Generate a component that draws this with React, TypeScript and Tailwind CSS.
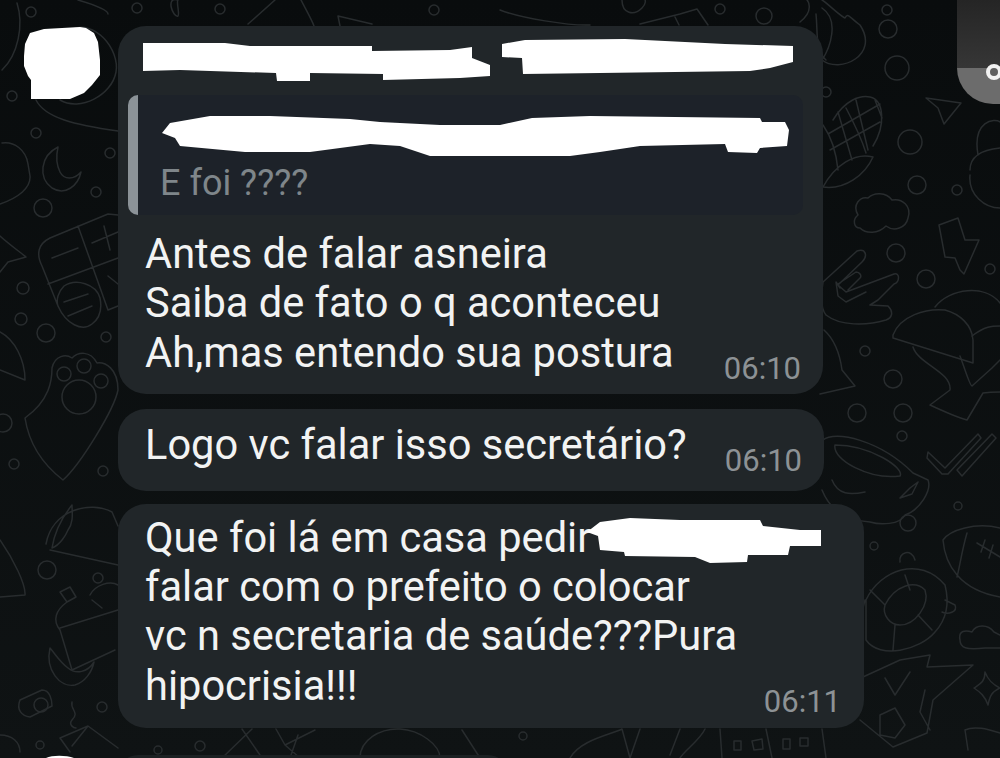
import React from "react";

const circles: [number, number, number][] = [
  [31, 12, 5], [137, 8, 5], [12, 96, 5], [36, 133, 5], [110, 153, 5], [43, 208, 9], [96, 192, 5],
  [23, 288, 6], [21, 319, 6], [46, 333, 9], [106, 337, 5], [14, 464, 5], [3, 423, 9], [103, 471, 5],
  [220, 9, 5], [434, 10, 5],
  [720, 9, 5], [764, 16, 8], [887, 10, 5], [888, 29, 9], [897, 68, 12], [826, 92, 5],
  [910, 142, 12], [917, 185, 9], [957, 190, 5],
  [896, 253, 9], [926, 279, 9], [990, 269, 5], [865, 351, 5], [893, 379, 9], [857, 413, 9], [903, 413, 9], [902, 436, 5],
  [47, 570, 9], [98, 578, 5], [41, 705, 7], [102, 707, 5], [874, 546, 4], [958, 506, 4], [908, 523, 8],
  [200, 746, 5], [40, 745, 4], [523, 736, 4], [158, 750, 4],
];

const lines = [
  // moon
  "M58 147 C40 156 38 178 52 188 C65 196 78 186 81 172 C74 180 64 180 60 172 C56 164 56 156 58 147Z",
  // top-left blobs
  "M17 3 C24 25 18 55 2 70",
  "M2 143 C14 141 26 150 28 164 L30 176 C31 188 18 198 0 204",
  "M78 0 C95 5 108 10 108 14",
  "M178 0 C165 -4 173 18 178 16 C180 14 176 2 178 0Z",
  // shell round avatar
  "M70 30 C95 18 120 50 116 72 C112 95 80 112 60 100 M36 100 C45 118 75 125 118 131",
  // corner shapes above bubble 1
  "M248 24 L275 0 M340 26 L338 16 L372 24",
  "M300 -2 C305 8 312 20 314 26",
  "M500 10 C520 18 570 26 590 25",
  "M640 24 L680 14 L697 9 L708 25 M675 17 L679 25",
  "M622 0 C622 14 634 16 642 8 C646 4 646 0 644 -2",
  "M800 22 C815 10 808 0 805 -2",
  // flame
  "M822 8 C840 20 830 48 822 60 C840 74 880 55 860 25 C850 18 848 12 845 18 C840 16 826 2 822 0",
  "M816 14 C818 35 815 50 826 60",
  // corn
  "M833 120 C845 100 860 95 870 97 C884 100 886 125 873 146 M823 187 C845 190 865 175 873 157 C855 152 835 165 823 187 M846 108 C855 125 862 140 866 153 M828 134 L880 104 M830 150 L880 122 M856 100 L868 150 M838 112 L852 160 M875 100 L882 118 M823 125 C830 135 836 150 838 170",
  // arrow
  "M926 98 L961 103 L944 124 L938 108 Z",
  // lock blob
  "M978 155 C972 120 995 118 1000 122 M970 170 C970 158 980 150 1000 148 M970 175 C968 195 985 208 1000 208",
  // cloud
  "M858 215 C852 205 860 196 868 198 C874 192 886 192 892 200 C902 198 912 206 908 218 C906 228 894 232 886 226 C878 234 866 234 860 228 C854 228 852 220 858 215Z",
  // bolt
  "M939 225 L958 218 L965 240 L979 240 L964 274 L960 270 L955 258 L945 257 Z",
  // rock hand
  "M823 282 L857 251 C866 248 868 256 862 262 L838 285 L846 292 L894 274 C900 272 900 282 894 284 L878 300 L870 305 L888 306 C894 312 892 318 886 320 C866 326 840 326 826 315 M838 284 L856 272 C860 272 862 276 860 278 L848 290 M840 288 L836 282 L838 296 L846 302 L866 292 M823 282 C820 300 822 310 826 315",
  // hat and head
  "M893 335 C900 316 926 308 945 310 C960 314 972 325 973 340 L973 363 L893 338 Z",
  "M935 307 C950 288 985 284 1000 303 M972 336 C985 326 992 326 1000 326 M913 347 C918 364 952 372 950 390 L930 405 C945 412 960 418 967 420 L983 393 C990 392 996 392 1000 392 M960 356 C966 372 970 386 972 386 L992 368 L1000 360",
  // bell-ish left of hat
  "M824 330 C835 340 840 355 842 370 L855 386 L820 394",
  // mug
  "M823 440 C835 430 880 440 913 473 L928 480 C932 490 920 510 905 515 C900 525 880 525 870 522 C845 520 830 510 822 490 M835 445 C832 460 870 480 900 476 C905 468 870 445 835 445Z M832 480 C838 495 850 495 865 492 M910 488 L900 498 L912 494 L918 482Z",
  // tick
  "M928 452 L945 468 L978 434 L981 438 L948 474 L942 474 L927 458 Z M957 470 L992 434 L996 438 L962 476 Z",
  // turtle
  "M866 600 C880 570 920 555 945 585 C950 605 946 620 935 632 C920 650 880 660 866 640 Z M885 605 C895 585 915 580 925 590 C930 605 915 625 900 625 C890 625 882 615 885 605Z M900 562 C898 552 912 548 915 560 M945 600 L955 605 C958 612 948 615 942 612 M870 590 L885 605 M905 575 L910 590 M932 630 L918 615 M893 650 L895 625 M865 600 L862 612",
  // football
  "M1000 528 C975 522 950 530 943 540 C945 565 960 590 1000 597 M967 533 C962 550 960 565 957 577 M977 543 L1000 557 M985 540 L981 552 M993 545 L989 558",
  // right cloud
  "M960 640 C958 630 966 630 972 632 C976 624 988 624 994 632 L1000 635 M960 640 C960 648 966 650 985 648 L1000 648",
  // soccer ball / flame
  "M863 677 L900 660 L930 655 L927 667 L973 665 L933 700 L927 733 L893 747 L860 720 M880 715 L895 708 L905 725 L895 738 L880 735 Z M885 678 L895 695 L910 672 M925 690 L920 712 L930 730",
  "M985 672 C985 682 980 684 974 688 C980 692 985 696 988 705 C990 695 992 692 1000 688 C992 684 988 680 985 672Z",
  "M965 730 C975 725 990 730 1000 733 M965 730 L968 750",
  // taco
  "M46 544 C52 510 90 500 112 512 L118 526 M50 550 L118 565 M72 505 C60 520 54 535 52 548 C60 545 66 535 68 530 C74 522 72 512 72 505Z",
  // triangle-ish
  "M0 540 C14 560 26 585 25 595 L0 597",
  // bottle
  "M60 592 L70 587 L76 597 L67 602 Z M67 602 C56 610 52 620 60 630 L72 670 L115 650 M60 628 L118 610 M90 595 C95 585 110 580 118 585 M92 600 L102 608",
  // banana
  "M50 648 C45 670 60 688 75 685 C85 682 92 672 94 662 C88 672 76 675 68 668 C60 662 56 655 50 648Z",
  // box
  "M20 700 L42 690 C50 690 52 700 52 706 L30 717 C22 716 16 710 20 700Z M72 702 C70 710 80 712 72 720 C68 725 74 728 76 728",
  // triangles bottom
  "M60 738 L88 726 L118 748 M60 738 L70 752 M88 726 L72 746",
  "M0 735 C12 735 20 742 20 752",
  "M242 729 L262 758 M252 729 L222 758 M276 729 L285 745 M285 745 L315 730 M285 745 L300 758 M290 758 L298 735",
  "M360 758 C360 740 380 728 400 729 C420 730 440 745 440 758 M462 730 L480 758",
  "M570 758 C580 740 610 735 622 729 L630 758 L640 729",
  "M680 729 L670 755 M705 729 C700 740 685 750 680 758",
  // buildings
  "M720 729 L722 758 M766 729 L772 758 M822 729 L826 758",
  "M734 741 L741 741 L741 750 L734 750 Z M752 741 L762 739 L763 749 L754 750 Z M783 739 L790 739 L790 749 L783 749 Z M800 738 L808 738 L808 746 L800 746 Z",
  // paw
  "M25 418 C50 400 52 380 52 368 C55 355 66 354 72 358 C78 352 90 350 97 363 C105 362 118 368 118 390 C114 410 80 465 63 480 C50 470 30 450 25 418Z",
  "M79 397 m-17 0 a17 17 0 1 0 34 0 a17 17 0 1 0 -34 0",
  "M64 374 m-7 0 a7 7 0 1 0 14 0 a7 7 0 1 0 -14 0",
  "M84 366 m-7 0 a7 7 0 1 0 14 0 a7 7 0 1 0 -14 0",
  "M101 381 m-7 0 a7 7 0 1 0 14 0 a7 7 0 1 0 -14 0",
  // calculator
  "M118 215 L108 214 L50 238 C38 244 36 254 42 266 L58 306 C66 324 82 332 92 324 C100 318 102 308 100 298 C96 284 76 278 64 286 C58 292 56 300 58 306 M48 284 L118 258 M78 226 L108 310 L118 306 M52 258 L78 248 M92 243 L118 232 M104 226 L110 250 M64 302 L88 294 M68 316 L92 306 M108 276 L118 284",
  // left wing-like
  "M0 236 C10 245 20 252 26 257 L8 262 L0 272",
  "M0 332 C15 340 25 360 25 380 L0 370",
];

const redactions = [
  "24,56 25,44 30,33 44,29 80,27 86,28 94,33 98,42 100,60 100,75 92,85 84,93 70,99 31,99 31,80 28,76 24,66",
  "143,43 225,43 250,46 372,46 372,51 450,50 472,47 472,58 490,65 490,76 460,78 383,80 383,74 310,73 310,81 277,81 276,73 180,70 143,71",
  "502,44 525,40 625,39 725,44 793,46 793,62 770,68 750,71 600,73 523,74 522,58 502,57",
  "162,133 170,123 210,116 270,116 350,119 380,122 440,125 500,125 532,118 590,116 760,118 762,122 785,122 789,130 787,146 760,148 757,153 728,152 725,144 640,146 600,152 570,156 430,156 400,146 370,144 310,152 245,152 180,146 175,138",
  "587,532 600,522 630,518 680,520 760,520 763,526 800,530 821,530 821,546 790,546 788,555 748,555 747,562 710,563 695,557 625,556 624,552 600,550 598,536",
];

function Doodles() {
  return (
    <svg className="absolute inset-0" width={1000} height={758} viewBox="0 0 1000 758" fill="none" stroke="#282c2e" strokeWidth={1.5} strokeLinecap="round" strokeLinejoin="round">
      {lines.map((d, i) => <path key={i} d={d} />)}
      {circles.map(([x, y, r], i) => <circle key={i} cx={x} cy={y} r={r} />)}
    </svg>
  );
}

function MessageBody({ text, time }: { text: string; time: string }) {
  return (
    <div className="flex items-end justify-between">
      <p className="text-[41.6px] leading-[49.33px] text-[#f2f3f3] whitespace-pre">{text}</p>
      <span className="text-[31px] leading-[34px] text-[#8d9295] -mb-[9px]">{time}</span>
    </div>
  );
}

export default function App() {
  return (
    <div className="relative w-[1000px] h-[758px] overflow-hidden bg-gradient-to-b from-[#090c0d] to-[#0f1314] font-['Roboto',sans-serif]">
      <Doodles />

      <div className="relative flex flex-col pl-[118px] pt-[26px]">
        <div className="bg-[#212629] rounded-[28px] w-[705px] pl-[27px] pr-[22px] pt-[69px] pb-[17px]">
          <div className="-ml-[17px] mr-[-2px] h-[120px] mb-[14px] bg-[#1d2229] rounded-[10px] flex">
            <div className="w-[10px] bg-[#8b9297] rounded-l-[10px]" />
            <div className="pl-[22px] pt-[66px] text-[36px] leading-[44px] text-[#7f868a]">E foi ????</div>
          </div>
          <MessageBody text={"Antes de falar asneira\nSaiba de fato o q aconteceu\nAh,mas entendo sua postura"} time="06:10" />
        </div>
        <div className="bg-[#212629] rounded-[28px] w-[706px] mt-[15px] pl-[27px] pr-[22px] pt-[11px] pb-[21.5px]">
          <MessageBody text="Logo vc falar isso secretário?" time="06:10" />
        </div>
        <div className="bg-[#212629] rounded-[28px] w-[746px] mt-[13px] pl-[27px] pr-[23px] pt-[9px] pb-[18px]">
          <MessageBody text={"Que foi lá em casa pedir\nfalar com o prefeito o colocar\nvc n secretaria de saúde???Pura\nhipocrisia!!!"} time="06:11" />
        </div>
        <div className="w-[390px] h-[20px] mt-[27px] bg-[#1c2123] rounded-t-[20px]" />
      </div>

      <svg className="absolute inset-0" width={1000} height={758} viewBox="0 0 1000 758" fill="#ffffff">
        {redactions.map((p, i) => <polygon key={i} points={p} />)}
        <path d="M46 758 C52 755 66 755 74 758 Z" />
      </svg>

      <div className="absolute top-0 right-0 w-[43px] h-[104px] rounded-bl-[36px] overflow-hidden flex flex-col">
        <div className="h-[68px] bg-gradient-to-b from-[#252525] to-[#363636]" />
        <div className="flex-1 bg-[#6c6c6c]" />
      </div>
      <div className="absolute left-[986px] top-[64px] w-[16px] h-[16px] rounded-full border-[4px] border-[#f2f2f2] bg-[#5f5f5f]" />
    </div>
  );
}
